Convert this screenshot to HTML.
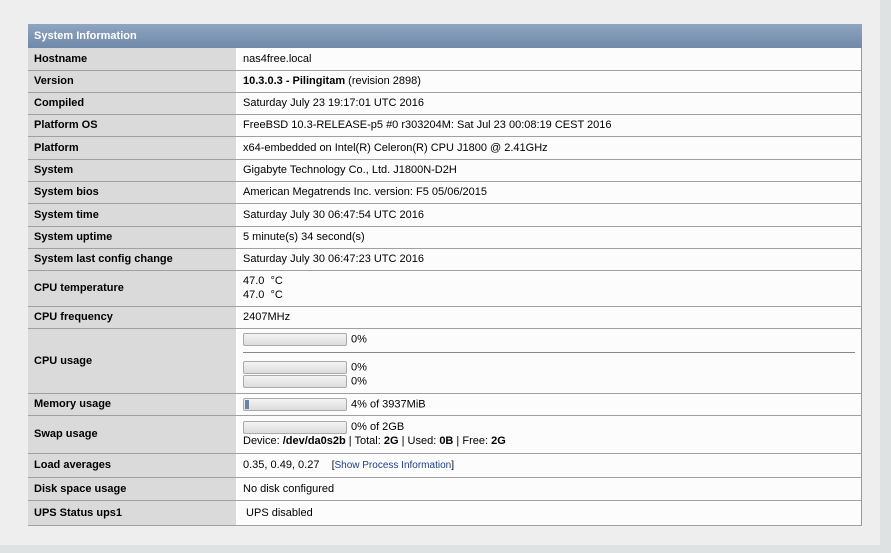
<!DOCTYPE html>
<html><head><style>
body{margin:0;background:#dfe2e2;font-family:"Liberation Sans",Tahoma,sans-serif;font-size:11px;color:#000}
.panel{position:absolute;left:0;top:0;width:880px;height:545px;background:#eeeeee}
table{position:absolute;left:28px;top:24px;width:834px;border-collapse:collapse;background:#fcfcfc}
th{height:24px;padding:0 0 0 6px;text-align:left;color:#fff;font-weight:bold;font-size:11px;background:linear-gradient(#8fa5c0,#7089a9);}
td{border-bottom:1px solid #a0a0a0;padding:0 6px;vertical-align:middle}
td.l{width:196px;background:#dadada;font-weight:bold;border-right:1px solid #fff}
td.v{border-right:1px solid #999}
.bar{display:inline-block;width:102px;height:11px;border:1px solid #aaa;border-radius:2px;background:linear-gradient(#f4f4f4,#dcdcdc);vertical-align:middle;margin-right:4px;position:relative}
.hr{border-top:1px solid #888;margin:6px 0 8px 0}
a{color:#1a3f8a;text-decoration:none}
</style></head><body>
<div class="panel"></div>
<table>
<tr><th colspan="2">System Information</th></tr>
<tr style="height:22px"><td class="l">Hostname</td><td class="v">nas4free.local</td></tr>
<tr style="height:22px"><td class="l">Version</td><td class="v"><b>10.3.0.3 - Pilingitam</b> (revision 2898)</td></tr>
<tr style="height:22px"><td class="l">Compiled</td><td class="v">Saturday July 23 19:17:01 UTC 2016</td></tr>
<tr style="height:22px"><td class="l">Platform OS</td><td class="v">FreeBSD 10.3-RELEASE-p5 #0 r303204M: Sat Jul 23 00:08:19 CEST 2016</td></tr>
<tr style="height:23px"><td class="l">Platform</td><td class="v">x64-embedded on Intel(R) Celeron(R) CPU J1800 @ 2.41GHz</td></tr>
<tr style="height:22px"><td class="l">System</td><td class="v">Gigabyte Technology Co., Ltd. J1800N-D2H</td></tr>
<tr style="height:22px"><td class="l">System bios</td><td class="v">American Megatrends Inc. version: F5 05/06/2015</td></tr>
<tr style="height:23px"><td class="l">System time</td><td class="v">Saturday July 30 06:47:54 UTC 2016</td></tr>
<tr style="height:22px"><td class="l">System uptime</td><td class="v">5 minute(s) 34 second(s)</td></tr>
<tr style="height:22px"><td class="l">System last config change</td><td class="v">Saturday July 30 06:47:23 UTC 2016</td></tr>
<tr style="height:36px"><td class="l">CPU temperature</td><td class="v" style="line-height:14px">47.0 &nbsp;°C<br>47.0 &nbsp;°C</td></tr>
<tr style="height:22px"><td class="l">CPU frequency</td><td class="v">2407MHz</td></tr>
<tr style="height:65px"><td class="l">CPU usage</td><td class="v" style="line-height:13px"><span class="bar"></span>0%<div class="hr"></div><span class="bar"></span>0%<br><span class="bar"></span>0%</td></tr>
<tr style="height:22px"><td class="l">Memory usage</td><td class="v"><span class="bar"><span style="position:absolute;left:1px;top:1px;width:4px;height:9px;background:#6d83a3"></span></span>4% of 3937MiB</td></tr>
<tr style="height:38px"><td class="l">Swap usage</td><td class="v" style="line-height:14px"><span class="bar"></span>0% of 2GB<br>Device: <b>/dev/da0s2b</b> | Total: <b>2G</b> | Used: <b>0B</b> | Free: <b>2G</b></td></tr>
<tr style="height:24px"><td class="l">Load averages</td><td class="v">0.35, 0.49, 0.27 &nbsp;&nbsp; <span style="font-size:10px">[<a>Show Process Information</a>]</span></td></tr>
<tr style="height:23px"><td class="l">Disk space usage</td><td class="v">No disk configured</td></tr>
<tr style="height:25px"><td class="l">UPS Status ups1</td><td class="v">&nbsp;UPS disabled</td></tr>
</table>
</body></html>
